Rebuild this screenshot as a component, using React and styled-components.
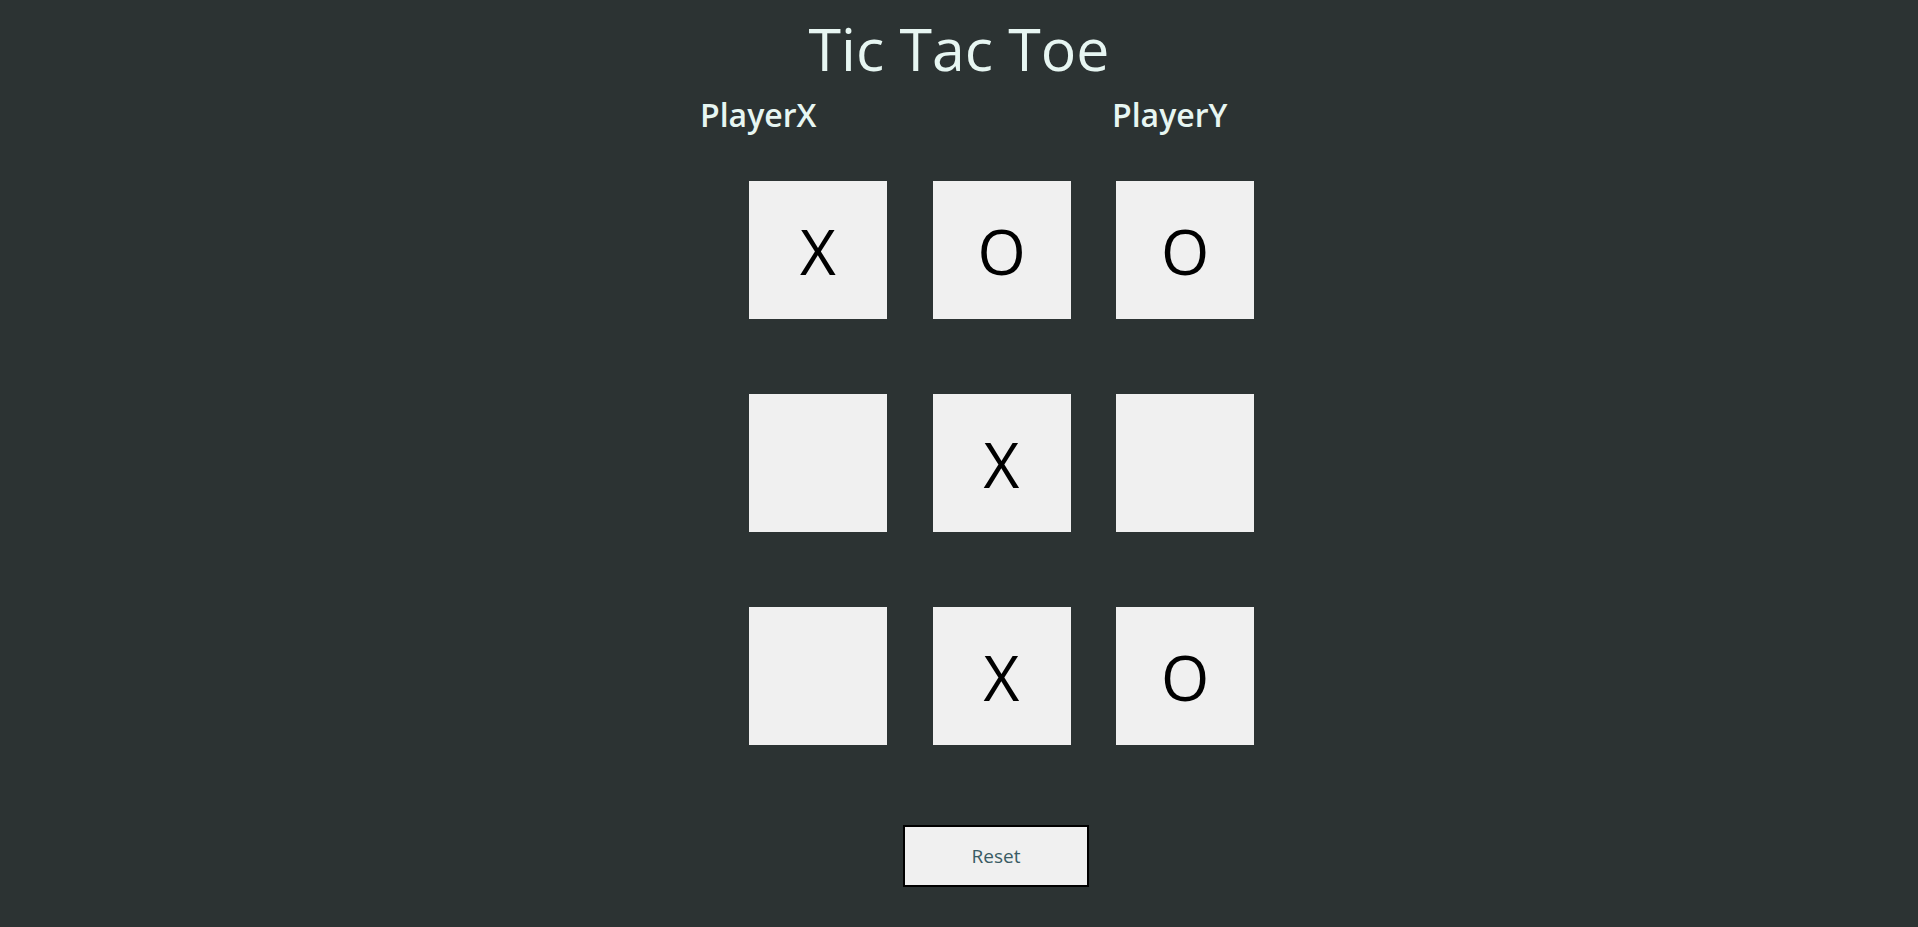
import React from "react";
import styled, { createGlobalStyle } from "styled-components";

const Global = createGlobalStyle`
  html, body {
    margin: 0;
    padding: 0;
    background: #2c3333;
  }
  body {
    font-family: "Open Sans", "Noto Sans", sans-serif;
    min-height: 927px;
  }
`;

const Page = styled.main`
  display: flex;
  flex-direction: column;
  min-height: 927px;
  background: #2c3333;
`;

const Title = styled.h1`
  margin: 0;
  padding-top: 8px;
  text-align: center;
  font-size: 59px;
  font-weight: 400;
  line-height: 80px;
  color: #e7f6f2;
`;

const Players = styled.div`
  display: flex;
  padding-left: 700px;
  margin-top: 5px;
`;

const PlayerName = styled.h2`
  margin: 0;
  width: ${(p) => p.$width || "auto"};
  font-size: 32px;
  font-weight: 600;
  line-height: 44px;
  color: #e7f6f2;
`;

const Board = styled.div`
  display: grid;
  grid-template-columns: repeat(3, 138px);
  grid-auto-rows: 138px;
  column-gap: 45.5px;
  row-gap: 75px;
  margin: 44px 0 0 749px;
`;

const Cell = styled.div`
  display: flex;
  align-items: center;
  justify-content: center;
  background: #f0f0f0;
  color: #000;
  font-size: 62px;
  font-weight: 400;
  padding-top: 1px;
  box-sizing: border-box;
`;

const ResetRow = styled.div`
  display: flex;
  padding-left: 903px;
  margin-top: 80px;
`;

const ResetButton = styled.button`
  width: 186px;
  height: 62px;
  box-sizing: border-box;
  border: 2px solid #000;
  background: #f0f0f0;
  color: #395b64;
  font-family: "Open Sans", "Noto Sans", sans-serif;
  font-size: 19px;
  cursor: pointer;
`;

const cells = ["X", "O", "O", "", "X", "", "", "X", "O"];

export default function App() {
  return (
    <Page>
      <Global />
      <Title>Tic Tac Toe</Title>
      <Players>
        <PlayerName $width="412px">PlayerX</PlayerName>
        <PlayerName>PlayerY</PlayerName>
      </Players>
      <Board>
        {cells.map((v, i) => (
          <Cell key={i}>{v}</Cell>
        ))}
      </Board>
      <ResetRow>
        <ResetButton>Reset</ResetButton>
      </ResetRow>
    </Page>
  );
}
